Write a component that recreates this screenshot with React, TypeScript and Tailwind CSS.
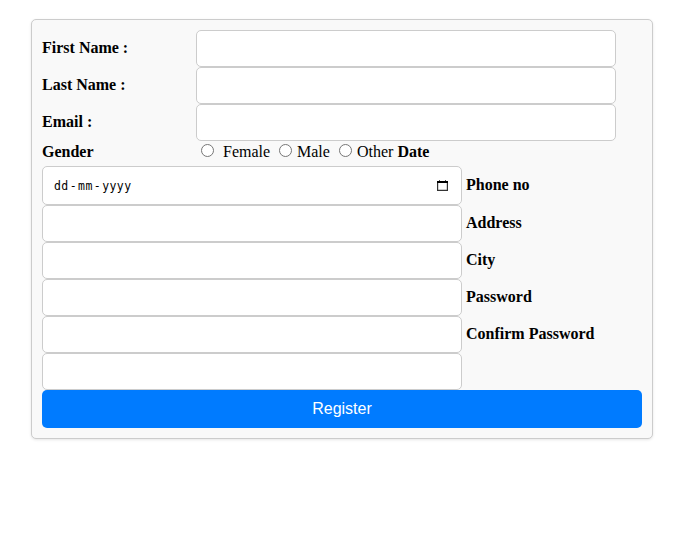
import type { ReactNode } from 'react';

const field =
  'block h-[37px] w-[420px] shrink-0 rounded-[5px] border border-[#ccc] bg-white px-[10px] outline-none';

function TopRow({ label }: { label: string }) {
  return (
    <div className="flex h-[37px] items-center">
      <label className="w-[154px] pb-[2px] font-bold">{label}</label>
      <input type="text" aria-label={label} className={field} />
    </div>
  );
}

function Row({ label, children }: { label?: string; children?: ReactNode }) {
  return (
    <div className="flex items-center">
      {children ?? <input type="text" className={field} />}
      {label && <label className="ml-1 pb-[2px] font-bold">{label}</label>}
    </div>
  );
}

function Radio() {
  return (
    <input
      type="radio"
      name="gender"
      className="mb-[3px] block size-[13px] shrink-0 appearance-none rounded-full border border-[#767676] bg-white"
    />
  );
}

function CalendarIcon() {
  return (
    <svg width="11" height="11" viewBox="0 0 11 11" className="mb-px shrink-0">
      <path d="M2 0h1v1H2zM8 0h1v1H8z" fill="#555" />
      <path d="M0 1h11v2H0z" fill="#000" />
      <path d="M.6 3v7.4h9.8V3" fill="none" stroke="#333" strokeWidth="1.2" />
    </svg>
  );
}

export default function App() {
  return (
    <div className="min-h-screen bg-white pt-[19px] pl-[31px] font-['Liberation_Serif','Times_New_Roman',serif] text-[16px] leading-[18px] text-black">
      <form className="h-[420px] w-[622px] rounded-[5px] border border-[#ccc] bg-[#f9f9f9] p-[10px] shadow-[0_1px_3px_rgba(0,0,0,0.1)]">
        <TopRow label="First Name :" />
        <TopRow label="Last Name :" />
        <TopRow label="Email :" />
        <div className="flex h-[25px] items-center pb-[3px]">
          <span className="w-[159px] font-bold">Gender</span>
          <Radio />
          <span className="ml-[9px] w-[56px]">Female</span>
          <Radio />
          <span className="ml-[5px] w-[42px]">Male</span>
          <Radio />
          <span className="ml-[5px]">Other</span>
          <span className="ml-1 font-bold">Date</span>
        </div>
        <Row label="Phone no">
          <div className="flex h-[39px] w-[420px] items-center justify-between rounded-[5px] border border-[#ccc] bg-white pr-[13px] pl-[11px]">
            <span className="flex font-['DejaVu_Sans_Mono',monospace] text-[11.5px] tracking-[0.38px]">
              <span>dd</span>
              <span className="w-[9.5px] text-center">-</span>
              <span>mm</span>
              <span className="w-[9.5px] text-center">-</span>
              <span>yyyy</span>
            </span>
            <CalendarIcon />
          </div>
        </Row>
        <Row label="Address" />
        <Row label="City" />
        <Row label="Password" />
        <Row label="Confirm Password" />
        <Row />
        <button
          type="button"
          className="block h-[38px] w-[600px] rounded-[5px] bg-[#007bff] text-center font-['Liberation_Sans',Arial,sans-serif] text-[16px] text-white"
        >
          Register
        </button>
      </form>
    </div>
  );
}
